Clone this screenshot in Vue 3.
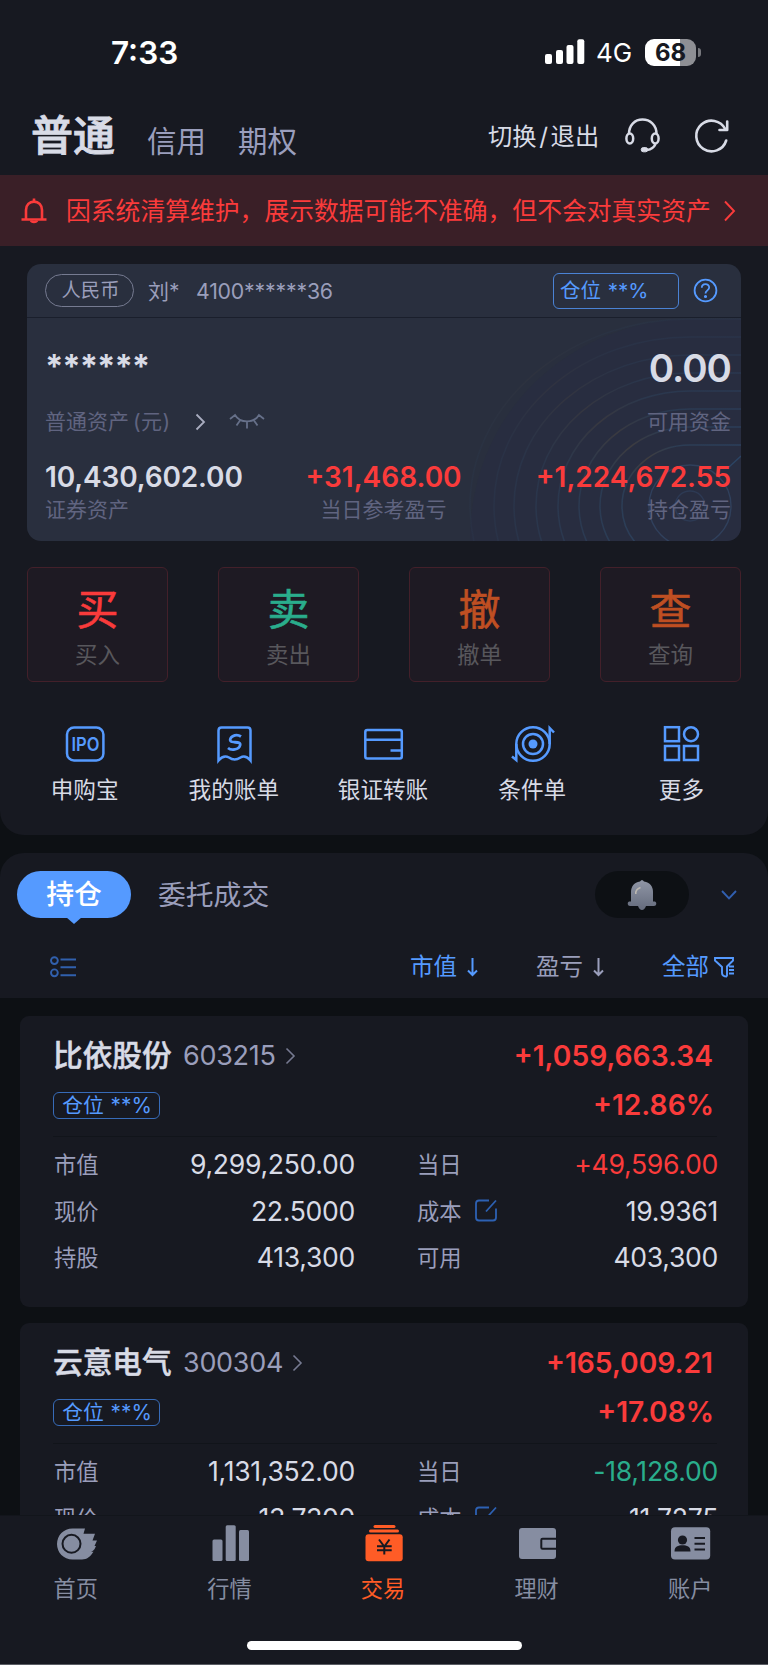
<script setup>
const rings = [
  [68, 61], [90, 79], [111, 97], [132, 115], [154, 133], [176, 151], [196, 169], [220, 187],
].map(([rx, ry], i) => ({
  d: `M741 ${506 - ry}H690A${rx} ${ry} 0 0 0 ${690 - rx} 506A${rx} ${ry} 0 0 0 690 ${506 + ry}`,
  o: 0.8 - i * 0.09,
}))

const actions = [
  { glyph: '买', label: '买入', tone: 'red' },
  { glyph: '卖', label: '卖出', tone: 'green' },
  { glyph: '撤', label: '撤单', tone: 'orange' },
  { glyph: '查', label: '查询', tone: 'orange' },
]

const tools = ['申购宝', '我的账单', '银证转账', '条件单', '更多']

const holdings = [
  {
    name: '比依股份', code: '603215', profit: '+1,059,663.34', rate: '+12.86%',
    rows: [
      ['市值', '9,299,250.00', '当日', '+49,596.00', 'red'],
      ['现价', '22.5000', '成本', '19.9361', ''],
      ['持股', '413,300', '可用', '403,300', ''],
    ],
  },
  {
    name: '云意电气', code: '300304', profit: '+165,009.21', rate: '+17.08%',
    rows: [
      ['市值', '1,131,352.00', '当日', '-18,128.00', 'green'],
      ['现价', '13.7300', '成本', '11.7275', ''],
    ],
  },
]

const tabs = ['首页', '行情', '交易', '理财', '账户']
</script>

<template>
  <div class="screen">
    <section class="top">
      <div class="status">
        <span class="time">7:33</span>
        <div class="status-right">
          <svg class="signal" width="40" height="26" viewBox="0 0 40 26" fill="#fff">
            <rect x="0" y="15" width="7" height="10" rx="2" />
            <rect x="11" y="11" width="7" height="14" rx="2" />
            <rect x="21.5" y="6" width="7" height="19" rx="2" />
            <rect x="32.3" y="0.3" width="7" height="24.7" rx="2" />
          </svg>
          <span class="net">4G</span>
          <div class="battery"><span>68</span></div>
          <i class="nub"></i>
        </div>
      </div>

      <header class="header">
        <b class="tab-main">普通</b>
        <span class="tab-sub">信用</span>
        <span class="tab-sub second">期权</span>
        <span class="switch">切换<i>/</i>退出</span>
        <svg class="headset" width="36" height="36" viewBox="0 0 36 36" fill="none" stroke="#d8dbe6" stroke-width="2.5">
          <path d="M4 16C4 7 10 1.6 17.5 1.6S31.500 7 31.500 16" />
          <ellipse cx="4.800" cy="20.500" rx="3.400" ry="5" />
          <ellipse cx="30.200" cy="20.500" rx="3.400" ry="5" />
          <path d="M30.500 26C29 29.500 26 31.500 22 32" />
          <rect x="16.200" y="29.600" width="6.500" height="4.200" rx="2.100" fill="#d8dbe6" stroke-width="1" />
        </svg>
        <svg class="refresh" width="36" height="36" viewBox="0 0 36 36" fill="none" stroke="#d8dbe6" stroke-width="2.600" stroke-linecap="round" stroke-linejoin="round">
          <path d="M32.200 22.500A15.300 15.300 0 1 1 31.300 11.200" />
          <path d="M33.200 3.500V12H25.500" />
        </svg>
      </header>

      <div class="banner">
        <svg width="26" height="26" viewBox="0 0 26 26" fill="none" stroke="#fa3b3b" stroke-width="2.600">
          <path d="M5 21.500V12C5 7 8.500 3.600 13 3.600S21 7 21 12V21.500M0.500 21.500H25.500" />
          <path d="M13 3.500V0.500M10 22.500C10.500 24.500 15.500 24.500 16 22.500" />
        </svg>
        <span>因系统清算维护，展示数据可能不准确，但不会对真实资产</span>
        <svg class="go" width="13" height="22" viewBox="0 0 13 22" fill="none" stroke="#fa3b3b" stroke-width="1.900"><path d="M2 1.500L11 11L2 20.500" /></svg>
      </div>

      <div class="asset">
        <svg class="rings" width="714" height="277" viewBox="27 264 714 277" fill="none">
          <defs>
            <linearGradient id="ring" x1="0" y1="1" x2="1" y2="0">
              <stop offset="0" stop-color="#2c4463" /><stop offset=".35" stop-color="#2d4058" />
              <stop offset=".55" stop-color="#45413f" /><stop offset=".72" stop-color="#2d4058" /><stop offset="1" stop-color="#2c4463" />
            </linearGradient>
          </defs>
          <path d="M741 319H690C585 319 470 400 470 541H741Z" fill="#282c44" opacity=".3" />
          <path v-for="r in rings" :key="r.d" :d="r.d" :opacity="r.o" stroke="url(#ring)" stroke-width="1.500" />
          <circle cx="690" cy="506" r="41" stroke="#30405c" stroke-width="1.400" />
          <circle cx="690" cy="506" r="15" stroke="#2d3a54" stroke-width="1.400" />
          <path d="M729 467L741 456" stroke="#2c4463" stroke-width="1.400" />
        </svg>
        <div class="account">
          <span class="currency">人民币</span>
          <span class="owner">刘*</span>
          <span class="number">4100******36</span>
          <span class="position">仓位 **%</span>
          <svg class="help" width="25" height="25" viewBox="0 0 25 25" fill="none" stroke="#559aff" stroke-width="1.800">
            <circle cx="12.500" cy="12.500" r="10.900" />
            <path d="M8.800 9.800C8.800 5 16.200 5 16.200 9.500C16.200 12.500 12.500 12.300 12.500 15.500" />
            <circle cx="12.500" cy="18.500" r=".7" fill="#559aff" />
          </svg>
        </div>
        <div class="headline"><b class="masked">******</b><b class="cash">0.00</b></div>
        <div class="captions">
          <span>普通资产<i>(元)</i></span>
          <svg class="more" width="11" height="18" viewBox="0 0 11 18" fill="none" stroke="#a9adc0" stroke-width="1.800"><path d="M1.500 1.500L9 9L1.500 16.500" /></svg>
          <svg width="36" height="18" viewBox="0 0 36 18" fill="none" stroke="#667089" stroke-width="1.800">
            <path d="M1 6L6 2C11 10.500 25 10.500 30 2L35 6M11 7.500L7.500 12.500M18 8.500V15.500M25 7.500L28.500 12.500" />
          </svg>
          <span class="end">可用资金</span>
        </div>
        <div class="figures">
          <div><b>10,430,602.00</b><span>证券资产</span></div>
          <div class="mid"><b class="red">+31,468.00</b><span>当日参考盈亏</span></div>
          <div class="last"><b class="red">+1,224,672.55</b><span>持仓盈亏</span></div>
        </div>
      </div>

      <div class="actions">
        <div v-for="a in actions" :key="a.label" class="action">
          <span class="glyph" :class="a.tone">{{ a.glyph }}</span>
          <span class="action-label">{{ a.label }}</span>
        </div>
      </div>

      <div class="tools">
        <div v-for="(t, i) in tools" :key="t" class="tool">
          <svg width="44" height="40" viewBox="0 0 44 40" fill="none" stroke="#559aff" stroke-width="2.500">
            <g v-if="i === 0">
              <rect x="4" y="3.600" width="36.400" height="32.800" rx="7" />
              <text x="22.400" y="27" class="ipo" text-anchor="middle" textLength="28" lengthAdjust="spacingAndGlyphs">IPO</text>
            </g>
            <g v-else-if="i === 1">
              <path d="M6.500 36.500V6.500Q6.500 3.500 9.500 3.500H35.500Q38.500 3.500 38.500 6.500V36.500Q33.500 30.500 28.500 33.500Q22.500 37.500 17 33.500Q11.500 30.500 6.500 36.500Z" />
              <path d="M29 12.500C23 8.500 16.500 14.500 18.500 17C20.500 19.500 29.500 16.500 28 21.500C27 26 19 26.500 16 24" stroke-width="2.800" />
            </g>
            <g v-else-if="i === 2">
              <rect x="4.300" y="6" width="36.500" height="28.500" rx="2" />
              <path d="M4.500 15.800H40.500M29.500 26.500H40.500" />
            </g>
            <g v-else-if="i === 3">
              <circle cx="23" cy="20" r="16.700" /><circle cx="23" cy="20" r="10" />
              <circle cx="23" cy="20" r="4.500" fill="#559aff" stroke="none" />
              <path d="M39.700 20V4L44 8.500M6.300 20V36L2 32.500" />
            </g>
            <g v-else>
              <rect x="6" y="3.200" width="14" height="14" /><circle cx="32" cy="10.200" r="7" />
              <rect x="6" y="22" width="14" height="14" /><rect x="25" y="22" width="14" height="14" />
            </g>
          </svg>
          <span>{{ t }}</span>
        </div>
      </div>
    </section>

    <section class="panel">
      <div class="panel-tabs">
        <span class="active">持仓</span>
        <span class="inactive">委托成交</span>
        <div class="bell">
          <svg width="30" height="32" viewBox="0 0 30 32">
            <defs><linearGradient id="metal" x1="0" y1="0" x2="0" y2="1"><stop offset="0" stop-color="#9096a6" /><stop offset="1" stop-color="#656c7d" /></linearGradient></defs>
            <path d="M13 2.500Q15 -0.500 17 2.500C23 3.500 26 7.500 26 13V22.500H28Q29.500 23 29.300 25Q29 27 27 27H19Q17.500 31 15 31T11 27H3Q1 27 .7 25Q.5 23 2 22.500H4V13C4 7.500 7 3.500 13 2.500Z" fill="url(#metal)" />
            <path d="M8.800 15C8.500 12 10.500 9.500 13.500 8.500" fill="none" stroke="#bdb9b2" stroke-width="1.500" />
          </svg>
        </div>
        <svg class="down" width="16" height="10" viewBox="0 0 16 10" fill="none" stroke="#315fb0" stroke-width="1.900"><path d="M1 1L8 8.300L15 1" /></svg>
      </div>
      <div class="filters">
        <svg width="27" height="22" viewBox="0 0 27 22" fill="none" stroke="#3160ad" stroke-width="1.900">
          <circle cx="4.400" cy="4.600" r="3.400" /><circle cx="4.400" cy="16.800" r="3.400" />
          <path d="M10.500 3.500H26M10.500 11.300H26M10.500 19.200H26" />
        </svg>
        <span class="sort on">市值
          <svg width="11" height="20" viewBox="0 0 11 20" fill="none" stroke="currentColor" stroke-width="2"><path d="M5.500 1V18M1 13.500L5.500 18L10 13.500" /></svg>
        </span>
        <span class="sort profit">盈亏
          <svg width="11" height="20" viewBox="0 0 11 20" fill="none" stroke="currentColor" stroke-width="2"><path d="M5.500 1V18M1 13.500L5.500 18L10 13.500" /></svg>
        </span>
        <span class="sort on all">全部
          <svg width="21" height="21" viewBox="0 0 21 21" fill="none" stroke="currentColor" stroke-width="1.900"><path d="M13 19.500Q8 19.500 8 16V10L1 3.500V1H19V3.500L13 9.500V19.500M15 9.500H20M15 13H20M15 16.500H20" /></svg>
        </span>
      </div>
    </section>

    <div class="list">
      <article v-for="h in holdings" :key="h.code" class="holding">
        <div class="title">
          <b>{{ h.name }}</b><span>{{ h.code }}</span>
          <svg width="11" height="18" viewBox="0 0 11 18" fill="none" stroke="#767a91" stroke-width="1.600"><path d="M1.500 1.500L9 9L1.500 16.500" /></svg>
          <strong>{{ h.profit }}</strong>
        </div>
        <div class="subtitle"><span class="tag">仓位 **%</span><strong>{{ h.rate }}</strong></div>
        <div class="grid">
          <div v-for="r in h.rows" :key="r[0]" class="row">
            <span class="k">{{ r[0] }}</span><span class="v left">{{ r[1] }}</span>
            <span class="k">{{ r[2] }}
              <svg v-if="r[2] === '成本'" width="22" height="23" viewBox="0 0 22 23" fill="none" stroke="#2d61b3" stroke-width="1.800"><path d="M14 2.500H4Q1 2.500 1 5.500V19.500Q1 22.500 4 22.500H18Q21 22.500 21 19.500V10.500M11 13.500L21 2.500" /></svg>
            </span>
            <span class="v" :class="r[4]">{{ r[3] }}</span>
          </div>
        </div>
      </article>
    </div>

    <nav class="nav">
      <div class="nav-items">
        <div v-for="(t, i) in tabs" :key="t" class="nav-item" :class="{ current: i === 2 }">
          <svg width="44" height="40" viewBox="0 0 44 40" fill="currentColor">
            <g v-if="i === 0">
              <path d="M18.500 4.500H31L29.500 9.800H41L38.500 16.500H43L40.500 22H42C40.500 26 39 27 37 27.800H39.500C36 33 33 35.500 28 35.500H18.500C9.500 35.500 3 28.500 3 20S9.500 4.500 18.500 4.500Z" />
              <circle cx="17.500" cy="19.800" r="9" fill="none" stroke="#171921" stroke-width="2" />
            </g>
            <g v-else-if="i === 1">
              <rect x="5.500" y="15.500" width="10" height="21.500" rx="1.500" /><rect x="18.700" y="1.300" width="10" height="35.700" rx="1.500" /><rect x="32" y="6" width="10" height="31" rx="1.500" />
            </g>
            <g v-else-if="i === 2">
              <rect x="12.500" y="1" width="22" height="3" rx="1.500" /><rect x="8" y="5.600" width="30" height="3" rx="1.500" /><rect x="4.500" y="10.200" width="37.200" height="27" rx="3" />
              <path d="M18 15.500L23.300 22.500L28.500 15.500M23.300 22V30.500M16 22.200H30.700M16 26.300H30.700" fill="none" stroke="#171921" stroke-width="2" />
            </g>
            <g v-else-if="i === 3">
              <rect x="4" y="4" width="37" height="31" rx="3" />
              <path d="M41.500 14.800H27.500Q26.300 14.800 26.300 16V23.500Q26.300 24.700 27.500 24.700H41.500" fill="none" stroke="#171921" stroke-width="2" />
            </g>
            <g v-else>
              <rect x="3" y="3.300" width="39.200" height="32.300" rx="4" />
              <g fill="#171921"><circle cx="14.500" cy="16" r="4.600" /><path d="M6.500 27.500C6.500 22.500 10 21.300 14.500 21.300S22.500 22.500 22.500 27.500Z" /><path d="M26.500 13H37V15H26.500ZM26.500 18.700H37V20.700H26.500ZM26.500 24.400H37V26.400H26.500Z" /></g>
            </g>
          </svg>
          <span>{{ t }}</span>
        </div>
      </div>
      <div class="home-bar"></div>
    </nav>
  </div>
</template>

<style>
body { margin: 0; background: #0d1014; }
</style>

<style scoped>
.screen {
  width: 768px; height: 1665px; overflow: hidden; position: relative; background: #0d1014;
  display: flex; flex-direction: column; box-sizing: border-box;
  font-family: Inter, "Noto Sans CJK SC", sans-serif; color: #d8dbe6; white-space: nowrap;
}
.screen * { box-sizing: border-box; }
svg { display: block; flex: none; overflow: visible; }
i { font-style: normal; }
.red { color: #fa3b3b; }
.green { color: #2aad8c; }
.orange { color: #bf4f22; }

.top { height: 835px; flex: none; background: #171921; border-radius: 0 0 24px 24px; }
.status { height: 97px; padding: 8px 67px 0 111px; display: flex; align-items: center; justify-content: space-between; color: #fff; }
.time { font-size: 31.500px; font-weight: 600; line-height: 32px; }
.status-right { display: flex; align-items: center; }
.net { font-size: 26px; margin: 1px 1px 0 11px; width: 48px; line-height: 30px; }
.signal { margin-top: -1px; }
.battery { width: 51px; height: 27px; border-radius: 9px; background: linear-gradient(90deg, #fff 35px, #8e8f94 35px); color: #171921; font-size: 24px; font-weight: 700; line-height: 27px; text-align: center; margin-top: -1px; }
.nub { width: 3px; height: 9px; margin-left: 2px; border-radius: 0 4px 4px 0; background: #77787d; margin-top: -1px; }

.header { height: 78px; display: flex; align-items: center; padding-left: 31px; }
.tab-main { font-size: 42px; font-weight: 500; line-height: 46px; width: 116px; -webkit-text-stroke: .9px currentColor; }
.tab-sub { font-size: 29.500px; color: #9a9ebd; line-height: 32px; margin-top: 9px; width: 91px; }
.switch { font-size: 24.300px; line-height: 30px; margin-left: 159px; width: 137px; display: flex; }
.switch i { width: 14px; text-align: center; }
.refresh { margin-left: 33px; }
.banner { height: 71px; background: #3a1f27; display: flex; align-items: center; padding-left: 21px; color: #fa3b3b; font-size: 24.800px; line-height: 30px; }
.banner span { margin-left: 19px; width: 657px; }

.asset { position: relative; width: 714px; height: 277px; margin: 18px 0 0 27px; border-radius: 14px; overflow: hidden; background: #292f3e; }
.rings { position: absolute; left: 0; top: 0; }
.account, .headline, .captions, .figures { position: relative; display: flex; align-items: center; }
.account { height: 54px; border-bottom: 1px solid #1a1f2c; padding-left: 18px; color: #9a9ebb; font-size: 21px; }
.currency { width: 89px; height: 33px; border: 1px solid #767b91; border-radius: 17px; text-align: center; font-size: 19.300px; line-height: 31px; padding-left: 2px; }
.owner { margin: -2px 0 0 14px; width: 48px; }
.number { font-size: 21.300px; width: 357px; letter-spacing: -.2px; }
.position { width: 126px; height: 36px; border: 1px solid #4a82d4; border-radius: 6px; color: #559aff; font-size: 20.500px; line-height: 34px; padding-left: 6px; word-spacing: 1px; }
.help { margin-left: 14px; }
.headline { height: 101px; justify-content: space-between; padding: 0 10px 0 18px; }
.masked { font-size: 33px; font-weight: 700; line-height: 40px; letter-spacing: -1.100px; margin-top: -5px; }
.cash { font-size: 38.500px; font-weight: 600; line-height: 40px; letter-spacing: -1px; margin-top: -1px; }
.captions { height: 24px; margin-top: -9px; color: #606480; font-size: 21px; line-height: 24px; padding: 0 10px 0 18px; }
.captions i { margin-left: 4px; letter-spacing: .4px; }
.more { margin: 0 23px 0 24px; }
.end { margin-left: auto; }
.figures { margin-top: 25px; justify-content: space-between; padding: 0 10px 0 18px; }
.figures div { display: flex; flex-direction: column; width: 200px; }
.figures b { font-size: 28px; font-weight: 600; line-height: 37px; }
.figures div:first-child b { letter-spacing: -.15px; }
.figures span { color: #606480; font-size: 21px; line-height: 28px; }
.figures .mid { align-items: center; margin-left: -9px; }
.figures .last { align-items: flex-end; }

.actions { display: flex; justify-content: space-between; padding: 0 27px; margin-top: 26px; }
.action { width: 141px; height: 115px; border: 1px solid #43202a; border-radius: 6px; background: #1e1a23; display: flex; flex-direction: column; align-items: center; padding-top: 17px; }
.glyph { font-size: 42px; line-height: 50px; -webkit-text-stroke: .6px currentColor; }
.action-label { font-size: 22.500px; line-height: 30px; color: #58575c; margin-top: 5px; }
.tools { display: flex; padding: 0 12px 0 10px; margin-top: 42px; }
.tool { flex: 1; display: flex; flex-direction: column; align-items: center; }
.tool span { font-size: 22.600px; line-height: 30px; margin-top: 11px; }
.ipo { font-size: 19px; font-weight: 600; fill: #559aff; stroke: none; }

.panel { height: 145px; flex: none; margin-top: 18px; background: #171921; border-radius: 24px 24px 0 0; padding-top: 18px; }
.panel-tabs { display: flex; align-items: center; height: 47px; padding-left: 17px; font-size: 27.800px; }
.active { position: relative; width: 114px; height: 47px; line-height: 46px; border-radius: 24px; background: #559aff; color: #fff; text-align: center; font-weight: 500; }
.active::after { content: ""; position: absolute; left: 49px; top: 46px; border: solid transparent; border-width: 7px 8px 0; border-top-color: #559aff; }
.inactive { color: #9a9ebb; margin-left: 27px; width: 437px; line-height: 40px; }
.bell { width: 94px; height: 47px; border-radius: 24px; background: #0d1014; display: flex; align-items: center; justify-content: center; }
.down { margin-left: 32px; }
.filters { display: flex; align-items: center; height: 50px; margin-top: 24px; padding-left: 50px; font-size: 23.500px; line-height: 30px; }
.sort { display: flex; align-items: center; gap: 10px; color: #9a9ebb; }
.on { color: #559aff; margin-left: 333px; }
.profit { margin-left: 58px; }
.all { margin-left: 58px; gap: 5px; }

.list { padding: 18px 20px 0; display: flex; flex-direction: column; gap: 16px; }
.holding { height: 291px; flex: none; border-radius: 9px; background: #171921; padding: 20px 35px 0 33px; }
.title { height: 40px; display: flex; align-items: center; }
.title b { font-size: 29.700px; font-weight: 500; width: 130px; margin-top: -5px; -webkit-text-stroke: .5px currentColor; }
.title span { font-size: 27px; color: #9a9ebb; margin: -2px 9px 0 0; letter-spacing: -.3px; }
.title svg { margin-top: -1px; }
strong { margin-left: auto; color: #fa3b3b; font-weight: 600; font-size: 28.200px; }
.subtitle { display: flex; align-items: center; height: 40px; margin-top: 9px; }
.subtitle strong { margin-right: -1px; }
.tag { width: 107px; height: 27px; border: 1px solid #376bb8; border-radius: 6px; color: #559aff; font-size: 20.800px; line-height: 25px; text-align: center; word-spacing: 1px; padding-left: 1px; }
.grid { margin-top: 11px; border-top: 1px solid #11141a; padding-top: 4px; margin-right: -4px; }
.row { height: 46.500px; display: grid; grid-template-columns: 100px 202px 108px 255px; align-items: center; font-size: 22.300px; }
.row .k { color: #9a9ebb; display: flex; align-items: center; gap: 13px; padding-left: 1px; margin-top: -2px; }
.row .k:nth-child(3) { margin-left: 61px; }
.row .v { font-size: 26.600px; text-align: right; justify-self: end; letter-spacing: -.3px; }

.nav { position: absolute; left: 0; bottom: 0; width: 768px; height: 150px; background: #171921; border-top: 1px solid #12151b; border-bottom: 1px solid #5a5d64; padding-top: 8px; }
.nav-items { display: flex; color: #868da1; margin-left: -1px; }
.nav-item { width: 153.600px; display: flex; flex-direction: column; align-items: center; font-size: 22.200px; line-height: 30px; }
.nav-item span { margin-top: 10px; }
.current { color: #ff5c26; }
.home-bar { width: 275px; height: 9px; border-radius: 5px; background: #fff; margin: 37px auto 0; }
</style>
